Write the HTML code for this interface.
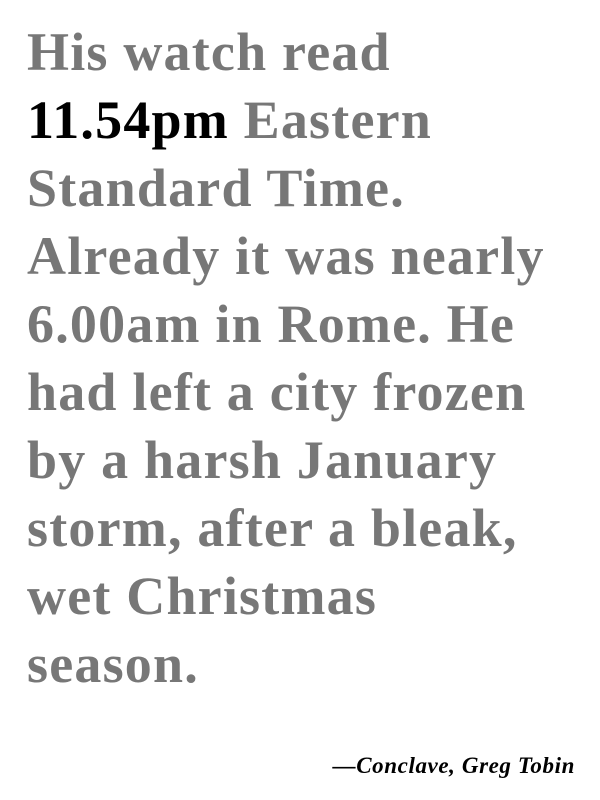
<!DOCTYPE html>
<html><head><meta charset="utf-8"><style>
html,body{margin:0;padding:0;background:#fff;width:600px;height:800px;overflow:hidden}
.q{position:absolute;left:27px;top:18px;font-family:"Liberation Serif",serif;font-weight:bold;font-size:54px;line-height:68px;color:#777;white-space:nowrap;letter-spacing:1.2px}
.q b{color:#000}
.a{position:absolute;right:25px;top:753px;font-family:"Liberation Serif",serif;font-weight:bold;font-style:italic;font-size:23px;color:#000;white-space:nowrap;letter-spacing:0.6px}
</style></head><body>
<div class="q">His watch read<br><b>11.54pm</b> Eastern<br>Standard Time.<br>Already it was nearly<br>6.00am in Rome. He<br>had left a city frozen<br>by a harsh January<br>storm, after a bleak,<br>wet Christmas<br>season.</div>
<div class="a">—Conclave, Greg Tobin</div>
</body></html>
